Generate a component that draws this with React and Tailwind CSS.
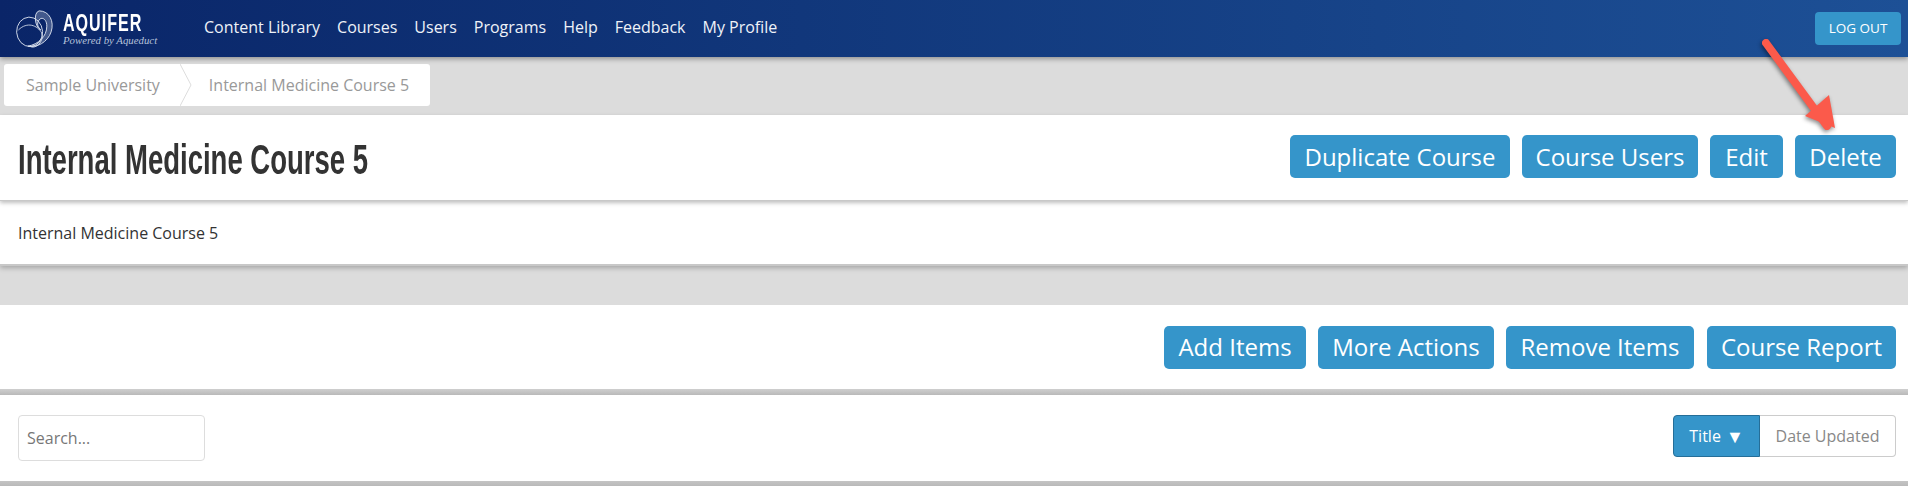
export default function App() {
  const btn = "flex items-center justify-center h-[43px] rounded-[5px] bg-[#3595ca] text-white text-[24px] whitespace-nowrap";
  return (
    <div className="relative h-[486px] overflow-hidden bg-[#dcdcdc] font-['Open_Sans',sans-serif] text-[#333333]">
      <header className="relative z-10 flex h-[57px] items-center bg-gradient-to-r from-[#0a2568] to-[#1d5096] shadow-[0_2px_5px_rgba(0,0,0,0.35)]">
        <div className="flex w-[204px] items-center pl-[15px]">
          <svg width="43" height="42" viewBox="0 0 50 44" fill="none" stroke="#dfe6f2" strokeWidth="1" className="shrink-0" preserveAspectRatio="none">
            <ellipse cx="17" cy="25" rx="15" ry="15.5" transform="rotate(-25 17 25)" strokeWidth="0.9" />
            <path d="M4 23 C14 14 26 18 31 26 C34 33 27 42 19 41" strokeWidth="0.9" />
            <path d="M28 3 C40 3 46 14 42 25 C38 36 25 42 15 40 C27 38 37 30 37 19 C37 11 30 8 27 14 C25 18 28 21 30 23 C23 20 21 5 28 3 Z" fill="#eef2f9" fillOpacity="0.25" />
          </svg>
          <div className="ml-[5px] flex flex-col">
            <span className="origin-left scale-x-[0.7] font-['Liberation_Sans',sans-serif] text-[23px] font-bold leading-[24px] tracking-[1.4px] text-white">AQUIFER</span>
            <span className="font-['Liberation_Serif',serif] text-[10.8px] italic leading-[11px] whitespace-nowrap text-[#b5c2da]">Powered by Aqueduct</span>
          </div>
        </div>
        <nav className="-mt-[4px] flex gap-[17px] text-[16px] text-[#eef2f8]">
          <span>Content Library</span>
          <span>Courses</span>
          <span>Users</span>
          <span>Programs</span>
          <span>Help</span>
          <span>Feedback</span>
          <span>My Profile</span>
        </nav>
        <div className="ml-auto mr-[7px] -mt-[1px] flex h-[33px] w-[86px] items-center justify-center rounded-[4px] bg-[#3595ca] text-[13.5px] text-white">LOG OUT</div>
      </header>

      <div className="h-[58px] pl-[4px] pt-[7px]">
        <div className="flex h-[42px] w-[426px] items-center rounded-[3px] bg-white text-[16px] text-[#999999]">
          <span className="pl-[22px]">Sample University</span>
          <svg width="12" height="42" viewBox="0 0 12 42" fill="none" stroke="#dddddd" className="ml-[20px] shrink-0">
            <path d="M0 0 L11 21 L0 42" />
          </svg>
          <span className="ml-[17px]">Internal Medicine Course 5</span>
        </div>
      </div>

      <section className="relative z-[1] flex h-[86px] items-center justify-between border-b border-[#c8c8c8] bg-white pl-[18px] pr-[12px] shadow-[0_2px_4px_rgba(0,0,0,0.25)]">
        <h1 className="mt-[3px] origin-left scale-x-[0.655] whitespace-nowrap font-['Liberation_Sans',sans-serif] text-[42px] font-bold text-[#333333]">Internal Medicine Course 5</h1>
        <div className="mb-[2px] flex gap-[12px]">
          <div className={`${btn} w-[220px]`}>Duplicate Course</div>
          <div className={`${btn} w-[176px]`}>Course Users</div>
          <div className={`${btn} w-[73px]`}>Edit</div>
          <div className={`${btn} w-[101px]`}>Delete</div>
        </div>
      </section>

      <section className="flex h-[65px] items-center border-b-2 border-[#c8c8c8] bg-white pl-[18px] text-[16px] shadow-[0_2px_5px_rgba(0,0,0,0.25)]">
        Internal Medicine Course 5
      </section>

      <section className="mt-[39px] flex h-[84px] items-center justify-end gap-[12px] bg-white pr-[12px]">
        <div className={`${btn} w-[142px]`}>Add Items</div>
        <div className={`${btn} w-[176px]`}>More Actions</div>
        <div className={`${btn} w-[188px]`}>Remove Items</div>
        <div className={`${btn} ml-[1px] w-[189px]`}>Course Report</div>
      </section>

      <div className="h-[6px] bg-gradient-to-b from-[#cfcfcf] to-[#b9b9b9]" />

      <section className="flex h-[86px] items-center justify-between bg-white pl-[18px] pr-[12px]">
        <div className="flex h-[46px] w-[187px] items-center rounded-[4px] border border-[#dddddd] pl-[8px] text-[16px] text-[#777777]">Search...</div>
        <div className="mb-[4px] flex h-[42px] text-[16px]">
          <div className="flex w-[87px] items-center justify-center gap-[5px] rounded-l-[4px] border border-[#256e98] bg-[#3595ca] text-white">Title <span className="text-[18px] leading-none">▼</span></div>
          <div className="flex w-[136px] items-center justify-center rounded-r-[4px] border border-l-0 border-[#cccccc] bg-white text-[#888888]">Date Updated</div>
        </div>
      </section>

      <div className="h-[5px] bg-gradient-to-b from-[#c4c4c4] to-[#b9b9b9]" />

      <svg className="absolute left-[1750px] top-[30px] z-20" width="110" height="110" viewBox="0 0 110 110" style={{ filter: "drop-shadow(-1px 2px 2px rgba(0,0,0,0.45))" }}>
        <path d="M16 13 L77 96" stroke="#fb5a4b" strokeWidth="8" strokeLinecap="round" fill="none" />
        <path d="M85 98 L79 65 L55 86 Z" fill="#fb5a4b" />
      </svg>
    </div>
  );
}
